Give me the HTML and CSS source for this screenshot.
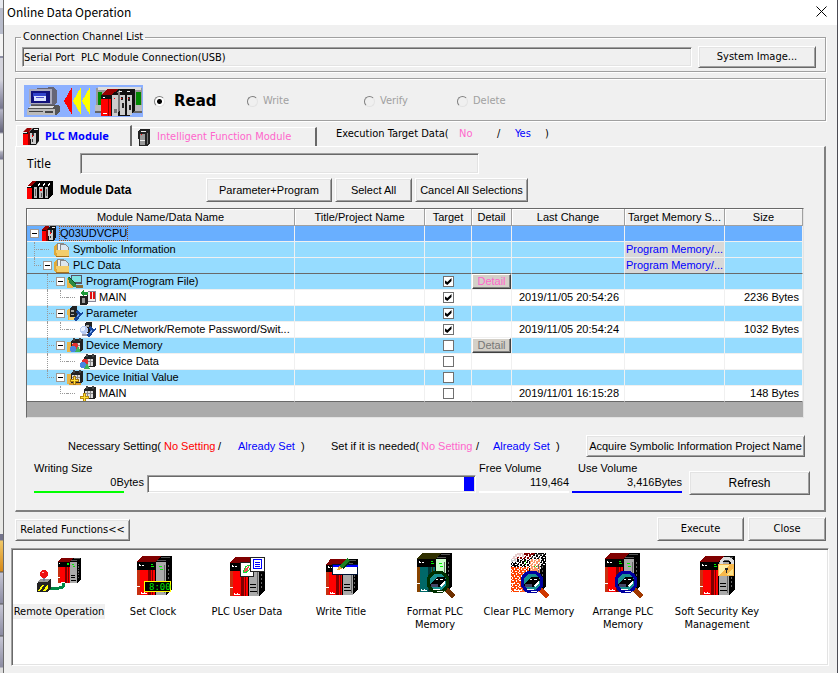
FILE: index.html
```html
<!DOCTYPE html>
<html lang="en">
<head>
<meta charset="utf-8">
<title>Online Data Operation</title>
<link rel="stylesheet" href="styles.css">
</head>
<body>
<svg class="defs" aria-hidden="true">
  <defs>
    <symbol id="plc" viewBox="0 0 35 39">
      <path class="plc-top" d="M0 6L5 0H24L18 6Z"/>
      <path d="M18 6L24 0H35V33L29 39V6Z" fill="#000"/>
      <path d="M20 4h9v1h-9zM24 1h9v1h-9z" fill="#555"/>
      <path class="plc-front" d="M0 6H18V39H0Z"/>
      <path d="M0 6H18V14H0Z" fill="#000"/>
      <path class="plc-edge" d="M0 14H3V39H0Z"/>
      <path class="plc-stripe" d="M11 14H14V39H11Z"/>
      <path class="plc-top" d="M15 14H16V39H15Z"/>
      <path d="M2 8h1v1h1v1h-2zM5 9h2v1h-2zM0 30h3v1h-3zM4 36h1v1h2v-1h1v1h2v1h-6z" fill="#fff"/>
      <path class="plc-side" d="M19 6H29V39H19Z"/>
      <path d="M18 6h1v33h-1zM20 27h6v1h-6zM20 30h6v1h-6zM20 34h7v1h-7z" fill="#000"/>
      <path d="M27 9h1v28h-1z" fill="#666"/>
      <path d="M31 9h1v2h-1zM31 13h1v2h-1zM31 17h1v2h-1zM31 21h1v2h-1zM31 25h1v2h-1zM31 29h1v2h-1z" fill="#666"/>
      <path d="M14 8h2v1h-2zM14 10h3v1h-3zM22 10h3v1h-3zM23 13h3v1h-3z" fill="#0e0"/>
    </symbol>
    <symbol id="cpu" viewBox="0 0 16 17">
      <path d="M0 4L4 0H9L6 4Z" fill="#900"/><path d="M6 4L10 0H16V13L13 17H0V4Z" fill="#111"/>
      <path d="M0 6H5V17H0Z" fill="#f00"/><path d="M5 4H7V17H5Z" fill="#800"/>
      <path d="M7 5H13V16H8V11H7Z" fill="#ccc"/><path d="M9 5h2v3h-2zM9 11h1v3h-1z" fill="#333"/><path d="M9 7h1v2h-1z" fill="#f00"/>
      <path d="M0 4h4v1H0zM11 1h4v1h-4z" fill="#eee"/>
    </symbol>
    <symbol id="folder" viewBox="0 0 16 15">
      <path d="M0 4L3 2H5L6 14H2L0 13Z" fill="#e0a93a"/>
      <path d="M3 1h6l3 3v9H4z" fill="#eef2f6" stroke="#888" stroke-width="1"/>
      <path d="M6 2h5l3 3v7H6z" fill="#dde6ee" stroke="#888" stroke-width="1"/>
      <path d="M2 8H15V14H3Z" fill="#f3cd6b"/>
      <path d="M2 14H15V15H2Z" fill="#a8741c"/>
    </symbol>
    <symbol id="unit" viewBox="0 0 13 14">
      <path d="M1 3L4 1H12L13 2V11L11 13H1Z" fill="#222"/><path d="M2 5H10V12H2Z" fill="#ddd"/>
      <path d="M2 7h8v1H2zM4 5h1v7H4zM7 5h1v7H7z" fill="#888"/><path d="M3 0h2v3H3zM9 0h2v3H9z" fill="#444"/>
    </symbol>
    <symbol id="wrench" viewBox="0 0 9 13">
      <path d="M5 0L4 3L6 5L9 4V6L6 8L4 12L1 13L0 11L3 7L2 3Z" fill="#17479e"/><path d="M3 9L5 6" stroke="#6fa4ef" stroke-width="1"/>
    </symbol>
    <symbol id="lens" viewBox="0 0 30 30">
      <path d="M20 19L28 27" stroke-width="5" class="lens-grip"/>
      <circle cx="12" cy="12" r="10" fill="#189090" class="lens-ring" stroke-width="3"/>
      <path d="M4 14L11 7H19L20 10L13 17H5Z" fill="#000"/><path d="M5 14h7v3H5z" fill="#446"/>
      <path d="M10 9h2v1h2v-1h3v1h-7zM14 15l5-4v2l-4 4zM7 19h7v1H7zM11 21h6v1h-6z" fill="#fff"/>
    </symbol>
    <pattern id="speckle" width="7" height="7" patternUnits="userSpaceOnUse">
      <path d="M0 0h2v1H0zM4 0h1v2H4zM2 2h1v2H2zM5 3h2v1H5zM0 4h1v2H0zM3 5h2v1H3zM6 6h1v1H6z" fill="#fff"/>
    </pattern>
  </defs>
</svg>

<div class="desktop">
<div class="backdrop"></div>
<main class="dialog">
  <header class="titlebar">
    <h1>Online Data Operation</h1>
    <button class="close" aria-label="Close window"><svg width="11" height="11" viewBox="0 0 11 11"><path d="M.5.5l10 10M10.500.5l-10 10" stroke="#000" fill="none"/></svg></button>
  </header>

  <div class="content">
    <fieldset class="group channel">
      <legend>Connection Channel List</legend>
      <input class="sunken" type="text" readonly aria-label="Connection channel" value="Serial Port  PLC Module Connection(USB)">
      <button class="btn">System Image...</button>
    </fieldset>

    <div class="group modes">
      <svg class="flow" width="119" height="32" viewBox="0 0 119 32" shape-rendering="crispEdges" aria-hidden="true">
        <path d="M0 0H119V32H0Z" fill="#8cb0ff"/>
        <path d="M8 4L29 2L33 5V18L29 21H8L5 18V5Z" fill="#667"/><path d="M5 4H28V19H5Z" fill="#aab"/><path d="M7 6H26V18H7Z" fill="#11117c"/><path d="M9 8H22V12H9Z" fill="#34c"/><path d="M10 11H22V16H10Z" fill="#dde4ff"/><path d="M12 12h8v1h-8z" fill="#55c"/>
        <path d="M3 24L7 20H34L36 22V26L32 30H3Z" fill="#555"/><path d="M3 24H31V30H3Z" fill="#bbb"/><path d="M5 26h14v1H5zM21 26h8v2h-8z" fill="#444"/><path d="M6 21h24l-2 2H5z" fill="#ddd"/>
        <path d="M48 2V30L40 16Z" fill="#f00"/><path d="M57 2V30L49 16ZM66 2V30L58 16Z" fill="#ff0"/>
        <path d="M72 3H118V28H72Z" fill="#999"/><path d="M74 2H117V5H74Z" fill="#ddd"/><path d="M74 7H78V20H74ZM112 7H117V22H112Z" fill="#080"/><path d="M71 20H118V27H71Z" fill="#bbb"/><path d="M71 26H118V28H71Z" fill="#666"/>
        <path d="M77 10L84 4H95L87 10Z" fill="#900"/><path d="M77 10H87V31H77Z" fill="#f00"/><path d="M77 10H87V14H77Z" fill="#111"/><path d="M84 14h1v17h-1z" fill="#900"/><path d="M79 12h2v1h-2zM79 28h4v1h-4z" fill="#fff"/>
        <path d="M87 10L95 4H111V25L106 31H87Z" fill="#111"/>
        <path d="M88 10H94V31H88Z" fill="#ccc"/><path d="M90 24h3v4h-3z" fill="#777"/><path d="M92 8l4-3v20l-2 3V8z" fill="#777"/>
        <path d="M96 10H101V30H96ZM103 10H108V30H103Z" fill="#ccc"/><path d="M97 12h2v3h-2zM98 18h2v5h-2zM104 12h2v4h-2zM105 20h2v5h-2z" fill="#222"/><path d="M97 13h1v1h-1zM104 13h1v1h-1zM90 13h1v1h-1z" fill="#f00"/><path d="M95 6h3v1h-3zM103 6h3v1h-3z" fill="#eee"/>
      </svg>
      <label class="mode chosen"><input type="radio" name="mode" checked><span>Read</span></label>
      <label class="mode"><input type="radio" name="mode" disabled><span>Write</span></label>
      <label class="mode"><input type="radio" name="mode" disabled><span>Verify</span></label>
      <label class="mode"><input type="radio" name="mode" disabled><span>Delete</span></label>
    </div>

    <div class="tabs">
      <button class="tab active"><svg width="16" height="17"><use href="#cpu"/></svg>PLC Module</button>
      <button class="tab"><svg width="13" height="17" viewBox="0 0 13 17" shape-rendering="crispEdges"><path d="M0 2L2 0H12V14L10 17H1Z" fill="#222"/><path d="M2 5H7V16H2Z" fill="#999"/><path d="M3 2h5v1H3zM2 11h5v1H2z" fill="#eee"/><path d="M3 5h1v1H3z" fill="#f00"/><path d="M9 4h1v11H9z" fill="#777"/></svg>Intelligent Function Module</button>
      <p class="target-key"><span>Execution Target Data(</span><span class="pink">No</span><span>/</span><span class="blue">Yes</span><span>)</span></p>
    </div>

    <section class="panel">
      <div class="title-row">
        <label for="title">Title</label>
        <input class="sunken" id="title" type="text" readonly>
      </div>
      <div class="module-row">
        <h2><svg width="26" height="18" viewBox="0 0 26 18" shape-rendering="crispEdges" aria-hidden="true"><path d="M0 5L5 0H26V13L22 18H0Z" fill="#000"/><path d="M0 5L5 0H9L5 5Z" fill="#900"/><path d="M0 7H5V18H0Z" fill="#f00"/><path d="M7 6H10V17H7ZM12 6H16V17H12ZM18 6H21V17H18Z" fill="#bbb"/><path d="M10 4L13 1V3L11 5ZM15 4L18 1V3L16 5ZM20 4L23 1V3L21 5ZM0 5H4V6H0Z" fill="#fff"/><path d="M8 8h1v7H8zM14 12h1v4h-1zM19 8h1v7h-1z" fill="#555"/><path d="M13 8h2v2h-2z" fill="#f00"/></svg>Module Data</h2>
        <button class="btn wide">Parameter+Program</button>
        <button class="btn mid">Select All</button>
        <button class="btn">Cancel All Selections</button>
      </div>

      <div class="grid-box">
        <table>
          <colgroup><col class="c-name"><col class="c-title"><col class="c-target"><col class="c-detail"><col class="c-change"><col class="c-memory"><col class="c-size"></colgroup>
          <thead>
            <tr><th>Module Name/Data Name</th><th>Title/Project Name</th><th>Target</th><th>Detail</th><th>Last Change</th><th>Target Memory S...</th><th>Size</th></tr>
          </thead>
          <tbody>
            <tr class="selected"><td><div class="node"><i class="exp"></i><svg><use href="#cpu"/></svg><span>Q03UDVCPU</span></div></td><td></td><td></td><td></td><td></td><td></td><td></td></tr>
            <tr class="band"><td><div class="node"><i class="tee"></i><i class="dash"></i><svg><use href="#folder"/></svg><span>Symbolic Information</span></div></td><td></td><td></td><td></td><td></td><td class="memory">Program Memory/...</td><td></td></tr>
            <tr class="band ruled"><td><div class="node"><i class="ell"></i><i class="exp"></i><svg><use href="#folder"/></svg><span>PLC Data</span></div></td><td></td><td></td><td></td><td></td><td class="memory">Program Memory/...</td><td></td></tr>
            <tr class="band"><td><div class="node"><i></i><i class="tee"></i><i class="exp"></i><svg viewBox="0 0 16 15"><path d="M0 4H6V14H0Z" fill="#e8b548"/><path d="M4 1H15V10H4Z" fill="#556"/><path d="M5 2H14V8H5Z" fill="#7fe3e3"/><path d="M1 3L9 11H15V13H6L2 8Z" fill="#2c8a42"/><path d="M2 3L9 10" stroke="#0a5020"/><path d="M9 11H16V14H9Z" fill="#8a6d3a"/></svg><span>Program(Program File)</span></div></td><td></td><td><input type="checkbox" checked aria-label="Program target"></td><td><button class="detail pink">Detail</button></td><td></td><td></td><td></td></tr>
            <tr><td><div class="node"><i></i><i class="bar"></i><i class="ell"></i><i class="dash"></i><svg viewBox="0 0 16 15"><path d="M0 3L4 0V2H9V5H4V7Z" fill="#1d9b3a"/><path d="M0 6H6L8 5V13L6 15H0Z" fill="#222"/><path d="M2 8H5V13H2Z" fill="#999"/><path d="M8 1H16V12H8Z" fill="#889"/><path d="M8 2H15V11H8Z" fill="#eee"/><path d="M10 2h2v7h-2zM13 2h2v7h-2z" fill="#e01010"/></svg><span>MAIN</span></div></td><td></td><td><input type="checkbox" checked aria-label="MAIN program target"></td><td></td><td class="date">2019/11/05 20:54:26</td><td></td><td class="size">2236 Bytes</td></tr>
            <tr class="band"><td><div class="node"><i></i><i class="tee"></i><i class="exp"></i><svg viewBox="0 0 16 15"><path d="M0 4L4 2H6V14H1Z" fill="#e8b548"/><path d="M3 2L5 0H10V12H3Z" fill="#222"/><path d="M4 4h3v2H4zM4 8h3v1H4z" fill="#aaa"/><path d="M2 11H11V14H2Z" fill="#f3cd6b"/><use href="#wrench" x="7" y="2" width="9" height="13"/></svg><span>Parameter</span></div></td><td></td><td><input type="checkbox" checked aria-label="Parameter target"></td><td></td><td></td><td></td><td></td></tr>
            <tr><td><div class="node"><i></i><i class="bar"></i><i class="ell"></i><i class="dash"></i><svg viewBox="0 0 16 15"><path d="M5 1L7 0H12V11H5Z" fill="#222"/><path d="M6 3h3v2H6z" fill="#aaa"/><circle cx="4" cy="8" r="4" fill="#b9cdf4"/><circle cx="3" cy="7" r="2" fill="#e9f0ff"/><path d="M2 12H9V14H2Z" fill="#99a"/><use href="#wrench" x="7" y="2" width="9" height="13"/></svg><span>PLC/Network/Remote Password/Swit...</span></div></td><td></td><td><input type="checkbox" checked aria-label="PLC parameter target"></td><td></td><td class="date">2019/11/05 20:54:24</td><td></td><td class="size">1032 Bytes</td></tr>
            <tr class="band"><td><div class="node"><i></i><i class="tee"></i><i class="exp"></i><svg viewBox="0 0 16 15"><path d="M0 4H5V14H0Z" fill="#e8b548"/><use href="#unit" x="3" y="0" width="13" height="14"/><circle cx="8" cy="8" r="3" fill="#e03030"/><circle cx="6" cy="11" r="3" fill="#4a86e0"/><path d="M8 14L11 8L14 14Z" fill="#3fb45a"/></svg><span>Device Memory</span></div></td><td></td><td><input type="checkbox" aria-label="Device memory target"></td><td><button class="detail" disabled>Detail</button></td><td></td><td></td><td></td></tr>
            <tr><td><div class="node"><i></i><i class="bar"></i><i class="ell"></i><i class="dash"></i><svg viewBox="0 0 16 15"><use href="#unit" x="3" y="0" width="13" height="14"/><circle cx="5" cy="8" r="3" fill="#e03030"/><circle cx="3" cy="11" r="3" fill="#4a86e0"/><path d="M4 15L7 9L10 15Z" fill="#3fb45a"/></svg><span>Device Data</span></div></td><td></td><td><input type="checkbox" aria-label="Device data target"></td><td></td><td></td><td></td><td></td></tr>
            <tr class="band"><td><div class="node"><i></i><i class="ell"></i><i class="exp"></i><svg viewBox="0 0 16 15"><path d="M0 4H5V14H0Z" fill="#e8b548"/><use href="#unit" x="3" y="0" width="13" height="14"/><path d="M2 13H14V15H2Z" fill="#d99a2a"/><path d="M6 6h2v3h3v2H8v3H6v-3H3V9h3z" fill="#ffe23a" stroke="#a87810" stroke-width="1"/></svg><span>Device Initial Value</span></div></td><td></td><td><input type="checkbox" aria-label="Device initial value target"></td><td></td><td></td><td></td><td></td></tr>
            <tr class="last"><td><div class="node"><i></i><i></i><i class="ell"></i><i class="dash"></i><svg viewBox="0 0 16 15"><use href="#unit" x="3" y="0" width="13" height="14"/><path d="M3 7h2v3h3v2H5v3H3v-3H0v-2h3z" fill="#ffe23a" stroke="#b88a10" stroke-width="1"/></svg><span>MAIN</span></div></td><td></td><td><input type="checkbox" aria-label="MAIN initial value target"></td><td></td><td class="date">2019/11/01 16:15:28</td><td></td><td class="size">148 Bytes</td></tr>
          </tbody>
        </table>
      </div>

      <div class="key-row">
        <p class="key"><span>Necessary Setting(</span><span class="red">No Setting</span><span>/</span><span class="blue">Already Set</span><span>)</span></p>
        <p class="key needed"><span>Set if it is needed(</span><span class="pink">No Setting</span><span>/</span><span class="blue">Already Set</span><span>)</span></p>
        <button class="btn">Acquire Symbolic Information Project Name</button>
      </div>

      <div class="volume-row">
        <div class="volume writing"><span>Writing Size</span><span class="amount">0Bytes</span></div>
        <div class="meter sunken"><div class="used"></div></div>
        <div class="volume free"><span>Free Volume</span><span class="amount">119,464</span></div>
        <div class="volume use"><span>Use Volume</span><span class="amount">3,416Bytes</span></div>
        <button class="btn">Refresh</button>
      </div>
    </section>

    <div class="actions">
      <button class="btn related">Related Functions&lt;&lt;</button>
      <button class="btn">Execute</button>
      <button class="btn shut">Close</button>
    </div>
  </div>

  <nav class="functions sunken">
    <a href="#" class="fn current"><svg viewBox="0 0 48 48">
      <use href="#plc" x="23" y="5" width="23" height="27"/>
      <path d="M12 36H24Q29 36 29 31" fill="none" stroke="#084" stroke-width="3"/>
      <path d="M2 31L6 27H16V36L12 40H2Z" fill="#222"/><path d="M2 31H13V40H2Z" fill="#222"/><path d="M3 29L6 27H15L12 30H3Z" fill="#999"/>
      <path d="M3 39L7 33H9L5 39ZM8 39L12 33H13V36L11 39Z" fill="#ff0"/><path d="M8 22h2v7H8z" fill="#779"/><circle cx="9" cy="22" r="4" fill="#e11"/><path d="M7 20h2v1H7z" fill="#fbb"/>
    </svg><span>Remote Operation</span></a>
    <a href="#" class="fn"><svg viewBox="0 0 48 48"><use href="#plc" x="8" y="4" width="35" height="39"/><path d="M15 29H42V40H15Z" fill="#ff0"/><path d="M16 30H41V39H16Z" fill="#000"/><text x="20" y="38">8:00</text></svg><span>Set Clock</span></a>
    <a href="#" class="fn"><svg viewBox="0 0 48 48"><use href="#plc" x="7" y="5" width="35" height="39"/><path d="M17 10H31V25H17Z" fill="#222"/><path d="M18 11H30V24H18Z" fill="#fff"/><path d="M20 18L26 14L25 19L20 21Z" fill="#e55"/><path d="M20 20Q24 10 28 15Q24 22 20 20" fill="none" stroke="#1d3"/><path d="M27 5H42V20H27Z" fill="#222"/><path d="M28 6H41V19H28Z" fill="#fff"/><path d="M30 7h8v1h-8zM32 10h5v1h-5zM32 12h5v1h-5zM32 14h5v1h-5zM30 16h8v1h-8zM30 7h1v9h-1zM38 7h1v10h-1z" fill="#00f"/></svg><span>PLC User Data</span></a>
    <a href="#" class="fn"><svg viewBox="0 0 48 48"><use href="#plc" x="9" y="7" width="32" height="36"/><path d="M15 12H41V23H15Z" fill="#013"/><path d="M16 15H40V22H16Z" fill="#fff"/><path d="M16 13H41V15H16Z" fill="#00f"/><path d="M20 18L23 13L30 6L33 9L25 16Z" fill="#1a8020"/><path d="M25 16L33 9V11L26 17Z" fill="#031"/><path d="M20 18L22 14L25 17Z" fill="#ea3"/></svg><span>Write Title</span></a>
    <a href="#" class="fn format"><svg viewBox="0 0 48 48"><use href="#plc" x="6" y="1" width="35" height="39"/><use href="#lens" x="15" y="18" width="30" height="30"/></svg><span>Format PLC Memory</span></a>
    <a href="#" class="fn clear"><svg viewBox="0 0 48 48"><use href="#plc" x="6" y="1" width="35" height="39"/><path d="M6 1H41V13H27V40H6Z" fill="url(#speckle)"/><path d="M6 0H19V5H12V10H6Z" fill="#fff" opacity=".8"/><path d="M9 3h25v14H9z" fill="url(#speckle)" transform="translate(3 1)"/><use href="#lens" x="15" y="18" width="30" height="30"/></svg><span>Clear PLC Memory</span></a>
    <a href="#" class="fn"><svg viewBox="0 0 48 48"><use href="#plc" x="6" y="1" width="35" height="39"/><use href="#lens" x="15" y="18" width="30" height="30"/></svg><span>Arrange PLC Memory</span></a>
    <a href="#" class="fn"><svg viewBox="0 0 48 48"><use href="#plc" x="7" y="4" width="35" height="39"/><path d="M28 13V9Q34 3 39 9V13" fill="none" stroke="#ddd" stroke-width="3"/><path d="M25 12H41V24H25Z" fill="#f8b84a"/><path d="M26 13H36L27 23H26Z" fill="#fdf0a8"/><path d="M40 16V23H33Z" fill="#fde48a"/><path d="M32 16h3v2h-1v3h-1v-3h-1z" fill="#222"/></svg><span>Soft Security Key Management</span></a>
  </nav>
</main>
</div>
</body>
</html>
```
FILE: styles.css
```css
* { box-sizing: border-box; }

body {
  margin: 0;
  background: #f0f0f0;
  color: #000;
  font: 11px/14px "DejaVu Sans Condensed", "Noto Sans", sans-serif;
}

button, input { font: inherit; color: inherit; margin: 0; border-radius: 0; }
h1, h2, p { margin: 0; font-size: inherit; font-weight: inherit; }
svg { display: block; flex: none; }
.defs { position: absolute; width: 0; height: 0; }

.pink { color: #ff66cc; }
.blue { color: #0000ff; }
.red { color: #ff0000; }

.desktop {
  display: grid;
  grid-template-columns: 3px 1fr;
  min-height: 100vh;
}

.backdrop {
  background: linear-gradient(#e8eaf0 0 8px, #b8bccb 8px 34px, #f4f4f4 34px 56px, #8f90a6 56px 58px, #d4d4dc 58px 80px, #c3c3d2 84px, #77778f 108px, #b5b5c6 110px, #65657b 132px, #f0f0f0 134px 150px, #b0b0be 152px, #77778f 159px, #e9e9e6 160px 534px, #74748c 534px 540px, #f0c868 541px, #d88a18 571px, #555 572px, #c6c6d4 573px, #8c8ca2 603px, #555 604px, #c6c6d4 605px, #8c8ca2 635px, #555 636px, #c6c6d4 637px, #8c8ca2 667px, #ddd 668px);
}

.dialog {
  min-width: 0;
  border-left: 1px solid #6d6d6d;
  border-right: 1px solid #4c4c54;
  background: #f0f0f0;
}

.titlebar {
  display: flex;
  align-items: center;
  justify-content: space-between;
  height: 25px;
  padding: 0 10px 2px 3px;
  background: #fff;
}
.titlebar h1 { font: 12px/22px "Noto Sans CJK KR", "Noto Sans", sans-serif; }
.close { padding: 0; border: 0; background: none; }

.content { padding: 5px 11px 0 11px; }

/* Raised and sunken edges */
.btn {
  height: 23px;
  padding: 0 3px;
  border: 1px solid;
  border-color: #fff #696969 #696969 #fff;
  box-shadow: inset 1px 1px #e3e3e3, inset -1px -1px #a0a0a0;
  background: #f0f0f0;
  white-space: nowrap;
}
.sunken {
  border: 1px solid;
  border-color: #a0a0a0 #fff #fff #a0a0a0;
  box-shadow: inset 1px 1px #696969, inset -1px -1px #e3e3e3;
  background: #f0f0f0;
}

.group {
  display: flex;
  align-items: center;
  margin: 0;
  border: 1px solid #a0a0a0;
  box-shadow: 1px 1px #fff, inset 1px 1px #fff;
}

.channel { min-width: 0; padding: 2px 9px 3px 6px; gap: 6px; }
.channel legend { padding: 0 2px; margin-left: -1px; }
.channel .sunken { flex: 1; height: 20px; padding: 0 1px; white-space: pre; }
.channel .btn { width: 118px; height: 22px; }

.modes { height: 43px; margin-top: 6px; padding: 3px 0 0 8px; }
.mode {
  display: grid;
  grid-template-columns: 12px 1fr;
  align-items: center;
  column-gap: 4px;
  width: 93px;
  color: #a0a0a0;
}
.mode:nth-of-type(2) { width: 117px; }
.mode.chosen {
  column-gap: 8px;
  margin-left: 11px;
  color: #000;
  font: bold 15px/20px "DejaVu Sans", sans-serif;
}
.mode input {
  appearance: none;
  width: 11px;
  height: 11px;
  border: 1px solid;
  border-color: #808080 #e3e3e3 #e3e3e3 #808080;
  border-radius: 50%;
  background: #f0f0f0;
}
.mode input:checked { background: radial-gradient(circle, #000 0 2px, #fff 3px); }

.tabs { display: flex; align-items: flex-end; margin-top: 4px; padding-left: 1px; }
.tab {
  display: flex;
  align-items: center;
  gap: 6px;
  width: 185px;
  height: 19px;
  padding: 0 6px;
  border: solid;
  border-width: 1px 2px 0 0;
  border-color: #fff #696969 #fff #fff;
  background: #f0f0f0;
  color: #ff66cc;
  white-space: nowrap;
}
.tab.active {
  width: 116px;
  height: 21px;
  border-left-width: 1px;
  color: #0000ff;
  font: bold 11px/14px "Noto Sans", sans-serif;
}
.target-key {
  display: grid;
  grid-template-columns: 123px 38px 18px 30px auto;
  margin-left: 19px;
  padding-bottom: 5px;
}

.panel {
  padding: 6px 0 15px 11px;
  border: solid;
  border-width: 1px 2px 2px 1px;
  border-color: #fff #808080 #808080 #fff;
}

.title-row { display: flex; align-items: center; }
.title-row label { width: 53px; font: 12px/16px "Noto Sans", sans-serif; }
.title-row .sunken { width: 50%; height: 21px; }

.module-row { display: flex; align-items: center; gap: 3px; margin-top: 4px; font-family: "Liberation Sans", sans-serif; }
.module-row h2 {
  display: flex;
  align-items: center;
  gap: 7px;
  width: 176px;
  font: bold 12px/16px "Liberation Sans", sans-serif;
}
.module-row .btn { width: 113px; height: 24px; }
.module-row .wide { width: 126px; }
.module-row .mid { width: 77px; }

.grid-box {
  margin: 6px 20px 0 -1px;
  padding-bottom: 15px;
  border: 1px solid;
  border-color: #696969 #e3e3e3 #e3e3e3 #696969;
  background: #ababab;
}

table {
  width: 100%;
  table-layout: fixed;
  border-collapse: separate;
  border-spacing: 0;
  background: #fff;
  font: 11px/15px "Liberation Sans", sans-serif;
}
.c-title { width: 130px; }
.c-target { width: 47px; }
.c-detail { width: 40px; }
.c-change { width: 113px; }
.c-memory { width: 100px; }
.c-size { width: 78px; }

th {
  height: 17px;
  padding: 0;
  border: solid #a0a0a0;
  border-width: 0 1px 1px 0;
  box-shadow: inset 1px 1px #fff;
  background: #f0f0f0;
  font-weight: normal;
}
td {
  height: 16px;
  padding: 0;
  border: solid #f0f0f0;
  border-width: 0 1px 1px 0;
  text-align: center;
  white-space: nowrap;
}
.band td { background: #96dcff; }
.selected td { background: #69afff; }
.ruled td, .last td { border-bottom-color: #696969; }
.band td.memory { background: #d8d8d8; color: #0000ff; }
td.date { padding-left: 2px; }
td.size { padding-right: 3px; text-align: right; }

.node { display: flex; height: 15px; padding-left: 1px; }
.node svg { width: 16px; height: 15px; margin-right: 2px; shape-rendering: crispEdges; }
.node span { padding: 0 1px; }
.selected .node span { outline: 1px dotted #a05010; outline-offset: -1px; }

/* Tree guides: one cell per depth */
.node i { position: relative; flex: none; width: 13px; height: 15px; }
.tee::before, .ell::before, .bar::before, .tee::after, .ell::after, .dash::after { content: ""; position: absolute; }
.tee::before, .ell::before, .bar::before { top: 0; left: 6px; height: 16px; border-left: 1px dotted #999; }
.node .ell::before { height: 8px; }
.tee::after, .ell::after { top: 7px; left: 6px; width: 7px; border-top: 1px dotted #999; }
.dash::after { top: 7px; left: 0; width: 8px; border-top: 1px dotted #999; }
.node .exp {
  width: 9px;
  height: 9px;
  margin: 3px 2px;
  border: 1px solid #a09890;
  background: linear-gradient(#000, #000) center / 5px 1px no-repeat #fff;
}

input[type="checkbox"] {
  appearance: none;
  display: block;
  width: 11px;
  height: 11px;
  margin: 0 auto;
  border: 1px solid #707070;
  background: #fff;
}
input[type="checkbox"]:checked::before {
  content: "";
  display: block;
  width: 7px;
  height: 7px;
  margin: 1px;
  background: #000;
  clip-path: polygon(0 28%, 40% 58%, 100% 0, 100% 42%, 40% 100%, 0 70%);
}

.detail {
  display: block;
  width: 100%;
  height: 15px;
  padding: 0;
  border: 1px solid;
  border-color: #fff #404040 #404040 #fff;
  box-shadow: inset -1px -1px #808080;
  background: #d4d0c8;
  line-height: 13px;
}
.detail:disabled { color: #777; }

.key-row {
  display: flex;
  align-items: center;
  margin: 17px 19px 0 0;
  padding-left: 41px;
  font-family: "Liberation Sans", sans-serif;
}
.key { display: grid; grid-template-columns: 96px 54px 20px 63px 30px; }
.key.needed { grid-template-columns: 90px 55px 17px 63px 12px; }
.key span { white-space: nowrap; }
.key-row .btn { margin-left: auto; height: 22px; padding: 0; width: 219px; }

.volume-row {
  display: grid;
  grid-template-columns: 110px 1fr 90px 110px 125px;
  align-items: end;
  column-gap: 3px;
  margin: 4px 14px 0 0;
  padding-left: 7px;
  font-family: "Liberation Sans", sans-serif;
}
.volume { display: flex; flex-direction: column; height: 32px; margin-bottom: 2px; border-bottom: 2px solid #fff; }
.volume .amount { text-align: right; }
.volume.writing { position: relative; border-color: transparent; }
.volume.writing::after {
  content: "";
  position: absolute;
  top: 30px;
  left: 0;
  width: 90px;
  border-bottom: 2px solid #00ff00;
}
.volume.use { border-color: #0000ff; }
.volume.use span:first-child { padding-left: 6px; }
.volume-row .btn { margin-left: 4px; height: 24px; font-size: 12px; }
.meter { display: flex; justify-content: flex-end; height: 18px; margin-bottom: 2px; padding: 1px; background: #fff; }
.used { width: 3%; background: #0000ff; }

.actions { display: flex; gap: 4px; align-items: flex-end; padding: 5px 0 0; }
.actions .btn { width: 87px; height: 24px; }
.actions .related { width: 115px; height: 22px; margin-right: auto; }
.actions .shut { width: 78px; }

.functions {
  display: grid;
  grid-template-columns: repeat(auto-fill, 94px);
  min-height: 118px;
  margin: 7px 8px 0 7px;
  padding: 3px 0;
  background: #fff;
}
.fn {
  display: flex;
  flex-direction: column;
  align-items: center;
  color: #000;
  line-height: 13px;
  text-align: center;
  text-decoration: none;
}
.fn svg { width: 48px; height: 48px; margin-bottom: 4px; shape-rendering: crispEdges; }
.fn span { max-width: 94px; padding: 1px 1px; }
.fn.current span { background: #f0f0f0; }
.fn text { fill: #00e800; font: 9px "DejaVu Sans Mono", monospace; }

.plc-top { fill: var(--top, #800000); }
.plc-front { fill: var(--front, #ff0000); }
.plc-edge { fill: var(--edge, #c83010); }
.plc-stripe { fill: var(--stripe, #800000); }
.plc-side { fill: var(--side, #aaa); }
.lens-ring { stroke: var(--ring, #0000a0); }
.lens-grip { stroke: var(--grip, #a03800); }
.format { --top: #303000; --front: #006868; --edge: #884400; --stripe: #003838; --side: #ccffcc; --ring: #003000; --grip: #703000; }
.clear { --front: #ff4400; --edge: #ff4400; --stripe: #ff6020; --side: #ff9966; --grip: #d03800; }
```
